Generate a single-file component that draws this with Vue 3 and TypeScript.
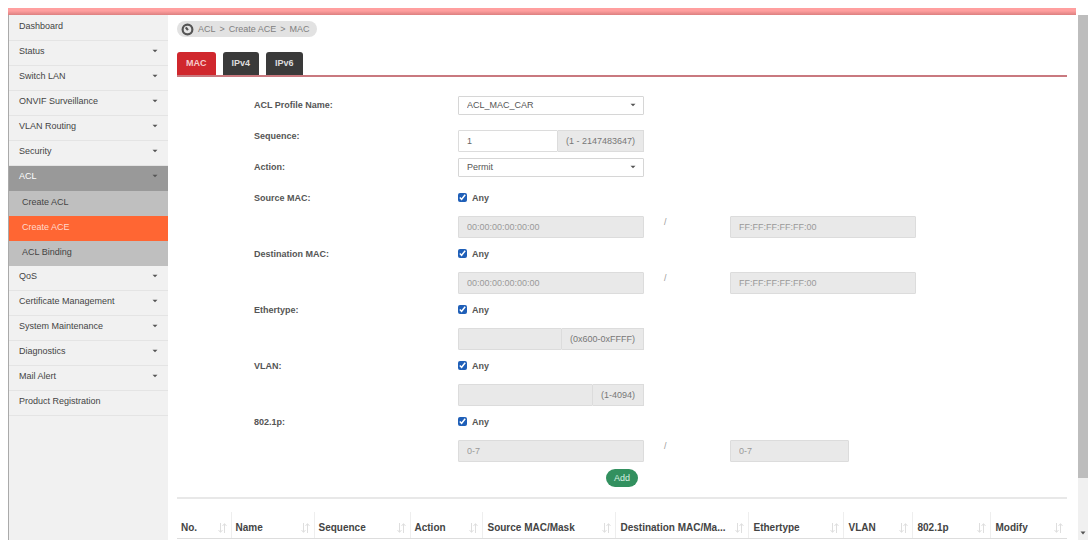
<script setup lang="ts">
import { ref } from 'vue'

interface MenuItem {
  label: string
  caret?: boolean
  kind?: 'open' | 'sub' | 'current'
}

const menu: MenuItem[] = [
  { label: 'Dashboard' },
  { label: 'Status', caret: true },
  { label: 'Switch LAN', caret: true },
  { label: 'ONVIF Surveillance', caret: true },
  { label: 'VLAN Routing', caret: true },
  { label: 'Security', caret: true },
  { label: 'ACL', caret: true, kind: 'open' },
  { label: 'Create ACL', kind: 'sub' },
  { label: 'Create ACE', kind: 'current' },
  { label: 'ACL Binding', kind: 'sub' },
  { label: 'QoS', caret: true },
  { label: 'Certificate Management', caret: true },
  { label: 'System Maintenance', caret: true },
  { label: 'Diagnostics', caret: true },
  { label: 'Mail Alert', caret: true },
  { label: 'Product Registration' },
]

const crumbs = ['ACL', 'Create ACE', 'MAC']

const tabs = ['MAC', 'IPv4', 'IPv6']
const activeTab = ref('MAC')

const sequence = ref('1')

interface Match {
  id: string
  label: string
  first: string
  second?: string
  short?: boolean
  range?: string
}

const matches: Match[] = [
  { id: 'src', label: 'Source MAC:', first: '00:00:00:00:00:00', second: 'FF:FF:FF:FF:FF:00' },
  { id: 'dst', label: 'Destination MAC:', first: '00:00:00:00:00:00', second: 'FF:FF:FF:FF:FF:00' },
  { id: 'eth', label: 'Ethertype:', first: '', range: '(0x600-0xFFFF)' },
  { id: 'vlan', label: 'VLAN:', first: '', range: '(1-4094)' },
  { id: 'prio', label: '802.1p:', first: '0-7', second: '0-7', short: true },
]

const columns = [
  { label: 'No.', weight: 54 },
  { label: 'Name', weight: 83 },
  { label: 'Sequence', weight: 96 },
  { label: 'Action', weight: 73 },
  { label: 'Source MAC/Mask', weight: 133 },
  { label: 'Destination MAC/Ma...', weight: 133 },
  { label: 'Ethertype', weight: 95 },
  { label: 'VLAN', weight: 69 },
  { label: '802.1p', weight: 78 },
  { label: 'Modify', weight: 76 },
]
const totalWeight = columns.reduce((sum, c) => sum + c.weight, 0)
</script>

<template>
  <div class="window">
    <div class="topbar"></div>
    <div class="body">
      <nav class="sidebar">
        <a v-for="item in menu" :key="item.label" href="#" class="item" :class="item.kind">
          <span>{{ item.label }}</span>
          <svg v-if="item.caret" class="caret" viewBox="0 0 6 4"><path d="M0.5 0.8h5L3 3.2z" /></svg>
        </a>
      </nav>

      <main class="main">
        <div class="crumbs">
          <svg class="home" viewBox="0 0 12 12">
            <circle cx="6" cy="6" r="4.5" />
            <path d="M6.4 6.6L4.4 4" />
          </svg>
          <template v-for="(crumb, i) in crumbs" :key="crumb">
            <span v-if="i > 0">&gt;</span>
            <span>{{ crumb }}</span>
          </template>
        </div>

        <div class="tabs">
          <button
            v-for="tab in tabs"
            :key="tab"
            type="button"
            class="tab"
            :class="{ active: tab === activeTab }"
            @click="activeTab = tab"
          >{{ tab }}</button>
        </div>

        <form class="form" @submit.prevent>
          <div class="row">
            <label class="name" for="profile">ACL Profile Name:</label>
            <div class="select">
              <select id="profile"><option>ACL_MAC_CAR</option></select>
              <svg class="caret" viewBox="0 0 6 4"><path d="M0.5 0.8h5L3 3.2z" /></svg>
            </div>
          </div>
          <div class="row sequence">
            <label class="name" for="sequence">Sequence:</label>
            <div class="group">
              <input id="sequence" v-model="sequence" type="text" class="text" />
              <span class="range">(1 - 2147483647)</span>
            </div>
          </div>
          <div class="row">
            <label class="name" for="action">Action:</label>
            <div class="select">
              <select id="action"><option>Permit</option></select>
              <svg class="caret" viewBox="0 0 6 4"><path d="M0.5 0.8h5L3 3.2z" /></svg>
            </div>
          </div>

          <div class="matches">
            <div v-for="m in matches" :key="m.id" class="row match">
              <label class="name" :for="m.id">{{ m.label }}</label>
              <label class="any"><input type="checkbox" checked />Any</label>
              <div class="group value">
                <input :id="m.id" type="text" class="text" :value="m.first" disabled />
                <span v-if="m.range" class="range">{{ m.range }}</span>
              </div>
              <template v-if="m.second">
                <span class="slash">/</span>
                <input
                  type="text"
                  class="text second"
                  :class="{ short: m.short }"
                  :value="m.second"
                  :aria-label="m.label + ' mask'"
                  disabled
                />
              </template>
            </div>
          </div>

          <div class="row">
            <div class="actions"><button type="submit" class="add">Add</button></div>
          </div>
        </form>

        <table class="rules">
          <colgroup>
            <col v-for="c in columns" :key="c.label" :style="{ width: (c.weight / totalWeight) * 100 + '%' }" />
          </colgroup>
          <thead>
            <tr>
              <th v-for="c in columns" :key="c.label">
                <div class="head">
                  <span>{{ c.label }}</span>
                  <svg class="sort" viewBox="0 0 9 10">
                    <path d="M2.5 0v9M0.5 7l2 2.4L4.5 7M6.5 10V1M4.5 3l2-2.4L8.5 3" />
                  </svg>
                </div>
              </th>
            </tr>
          </thead>
        </table>
      </main>

      <div class="scroll">
        <div class="thumb"></div>
        <svg class="caret" viewBox="0 0 6 4"><path d="M0.5 0.5h5L3 3.5z" /></svg>
      </div>
    </div>
  </div>
</template>

<style>
body {
  margin: 0;
  background: #fff;
}
</style>

<style scoped>
* {
  box-sizing: border-box;
}

.window {
  display: flex;
  flex-direction: column;
  min-height: 100vh;
  padding: 8px 2px 0 8px;
  font-family: "Liberation Sans", Arial, sans-serif;
  font-size: 9px;
  line-height: 12px;
  color: #444;
}

.topbar {
  height: 7px;
  margin-right: 12px;
  background: linear-gradient(#ff9f9f 40%, #dc8080);
}

.body {
  display: flex;
  flex: 1;
}

.sidebar {
  flex: none;
  width: 160px;
  padding-top: 1px;
  border-left: 1px solid #aaa;
  background: #f1f1f1;
}

.item {
  display: flex;
  align-items: center;
  justify-content: space-between;
  height: 25px;
  padding: 0 10px 4px;
  border-bottom: 1px solid #e4e4e4;
  color: #444;
  text-decoration: none;
}

.item.open {
  background: #999;
  border-color: #999;
  color: #fff;
}

.item.sub,
.item.current {
  padding-left: 13px;
  padding-bottom: 2px;
  background: #bfbfbf;
  border-color: #bfbfbf;
}

.item.current {
  background: #ff6633;
  border-color: #ff6633;
  color: #ffd9cc;
}

.caret {
  width: 6px;
  height: 4px;
  fill: #555;
}

.main {
  flex: 1;
  min-width: 0;
  padding: 6px 11px 0 9px;
}

.crumbs {
  display: inline-flex;
  align-items: center;
  gap: 4px;
  height: 16px;
  padding: 0 7px 0 4px;
  border-radius: 8px;
  background: #e2e2e2;
  color: #808080;
}

.home {
  width: 13px;
  height: 13px;
  fill: #e6e6e6;
  stroke: #555;
  stroke-width: 2;
}

.tabs {
  display: flex;
  gap: 7px;
  margin-top: 13px;
  border-bottom: 2px solid #c9797f;
}

.tab {
  height: 23px;
  padding: 0 9px;
  border: 0;
  border-radius: 3px 3px 0 0;
  background: #3a3a3a;
  color: #ddd;
  font: bold 9px/12px "Liberation Sans", Arial, sans-serif;
}

.tab.active {
  background: #d0272d;
  color: #f6cccc;
}

.form {
  padding: 19px 0 10px 77px;
  border-bottom: 2px solid #e8e8e8;
}

.row {
  display: grid;
  grid-template-columns: 204fr 186fr 86fr 186fr 151fr;
}

.sequence {
  margin: 15px 0 6px;
}

.name {
  padding-top: 3px;
  font-weight: bold;
  color: #555;
}

.sequence .name {
  padding-top: 0;
}

.select {
  display: grid;
  align-items: center;
}

.select > * {
  grid-area: 1 / 1;
}

.select .caret {
  justify-self: end;
  margin-right: 8px;
  pointer-events: none;
}

select {
  width: 100%;
  height: 19px;
  padding: 0 8px;
  border: 1px solid #d6d6d6;
  border-radius: 1px;
  appearance: none;
  background: #fff;
  color: #555;
  font: inherit;
}

.group {
  display: flex;
}

.text {
  flex: 1;
  width: 100%;
  min-width: 0;
  height: 22px;
  padding: 0 8px;
  border: 1px solid #dcdcdc;
  border-radius: 1px;
  background: #fff;
  color: #666;
  font: inherit;
}

.text:disabled {
  background: #e9e9e9;
  color: #999;
}

.range {
  display: flex;
  align-items: center;
  padding: 0 8px;
  border: 1px solid #dcdcdc;
  border-left: 0;
  background: #e9e9e9;
  color: #777;
}

.matches {
  display: grid;
  gap: 10px;
  padding: 15px 0 7px;
}

.match {
  row-gap: 12px;
}

.match .name {
  padding-top: 0;
}

.any {
  display: flex;
  align-items: center;
  gap: 5px;
  font-weight: bold;
  color: #555;
}

.any input {
  width: 9px;
  height: 9px;
  margin: 0;
  accent-color: #1f5fb8;
}

.value {
  grid-column: 2;
}

.slash {
  padding-left: 20px;
  color: #999;
}

.text.short {
  width: 64%;
}

.actions {
  grid-column: 2;
  display: flex;
  justify-content: flex-end;
  padding-right: 6px;
}

.add {
  height: 18px;
  padding: 0 8px;
  border: 0;
  border-radius: 9px;
  background: #32905f;
  color: #d5f2e2;
  font: inherit;
}

.rules {
  width: 100%;
  margin-top: 13px;
  border-collapse: collapse;
  table-layout: fixed;
  font-size: 10px;
  color: #444;
}

th {
  height: 27px;
  padding: 7px 4px 0;
  border-right: 1px solid #eee;
  border-bottom: 1px solid #ddd;
  text-align: left;
}

th:last-child {
  border-right: 0;
}

.head {
  display: flex;
  align-items: center;
  justify-content: space-between;
  white-space: nowrap;
}

.sort {
  flex: none;
  width: 9px;
  height: 10px;
  fill: none;
  stroke: #dedede;
}

.scroll {
  display: flex;
  flex: none;
  flex-direction: column;
  align-items: center;
  justify-content: space-between;
  width: 10px;
  padding-bottom: 5px;
  background: #f0f0f0;
}

.thumb {
  width: 100%;
  height: 89%;
  background: #bdbdbd;
}
</style>
